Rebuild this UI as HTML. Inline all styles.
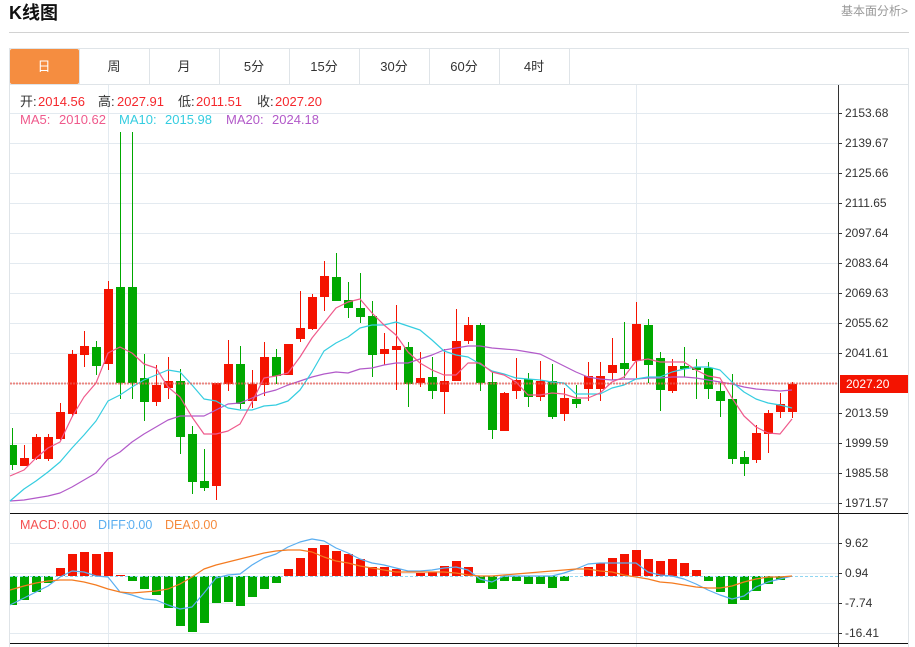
<!DOCTYPE html>
<html lang="zh">
<head>
<meta charset="utf-8">
<title>K线图</title>
<style>
html,body{margin:0;padding:0;background:#fff;width:915px;height:647px;overflow:hidden}
svg{display:block;position:absolute;left:0;top:0}
text{font-family:"Liberation Sans","Noto Sans CJK SC",sans-serif}
</style>
</head>
<body>
<svg width="915" height="647" viewBox="0 0 915 647" xmlns="http://www.w3.org/2000/svg">
<rect width="915" height="647" fill="#fff"/>
<text x="9" y="19" font-size="18" font-weight="700" fill="#111">K线图</text>
<text x="841" y="15" font-size="12" fill="#999">基本面分析&gt;</text>
<g shape-rendering="crispEdges">
<rect x="9" y="32" width="900" height="1" fill="#d2d2d2"/>
<rect x="9" y="48" width="900" height="1" fill="#dfe4e8"/>
<rect x="9" y="84" width="900" height="1" fill="#dfe4e8"/>
<rect x="9" y="48" width="1" height="599" fill="#dfe4e8"/>
<rect x="908" y="48" width="1" height="599" fill="#dfe4e8"/>
<path d="M79.5 49V84M149.5 49V84M219.5 49V84M289.5 49V84M359.5 49V84M429.5 49V84M499.5 49V84M569.5 49V84" stroke="#dfe4e8" fill="none"/>
</g>
<rect x="10" y="49" width="69" height="35" rx="2" fill="#f58d40"/>
<g font-size="13" fill="#333" text-anchor="middle">
<text x="44" y="71" fill="#fff">日</text>
<text x="114" y="71">周</text>
<text x="184" y="71">月</text>
<text x="254" y="71">5分</text>
<text x="324" y="71">15分</text>
<text x="394" y="71">30分</text>
<text x="464" y="71">60分</text>
<text x="534" y="71">4时</text>
</g>
<g shape-rendering="crispEdges" stroke="#e3eaf0" fill="none">
<path d="M10 113.5H838M10 143.5H838M10 173.5H838M10 203.5H838M10 233.5H838M10 263.5H838M10 293.5H838M10 323.5H838M10 353.5H838M10 383.5H838M10 413.5H838M10 443.5H838M10 473.5H838M10 503.5H838"/>
<path d="M10 543.5H838M10 573.5H838M10 603.5H838M10 633.5H838"/>
<path d="M108.5 85V647M636.5 85V647"/>
</g>
<g shape-rendering="crispEdges">
<g stroke="#f41300" fill="none">
<path d="M24.5 445V466M36.5 434V460M48.5 434V461M60.5 403V440M72.5 350V417M84.5 331V367M108.5 281V370M156.5 365V406M168.5 357V399M216.5 383V500M228.5 340V391M252.5 370V408M264.5 342V396M288.5 344V375M300.5 291V342M312.5 294V330M324.5 261V311M384.5 333V365M396.5 305V390M420.5 352V387M444.5 349V414M456.5 309V381M468.5 317V344M504.5 392V431M516.5 358V399M540.5 361V401M564.5 388V421M588.5 362V401M600.5 362V401M612.5 338V380M636.5 302V378M672.5 359V393M756.5 425V463M768.5 410V453M780.5 393V418M792.5 382V418"/>
</g>
<path fill="#f41300" d="M20 458h9v8h-9zM32 437h9v22h-9zM44 437h9v22h-9zM56 412h9v27h-9zM68 354h9v60h-9zM80 346h9v9h-9zM104 289h9v75h-9zM152 385h9v17h-9zM164 381h9v7h-9zM212 383h9v103h-9zM224 364h9v20h-9zM248 384h9v17h-9zM260 357h9v28h-9zM284 344h9v31h-9zM296 328h9v11h-9zM308 297h9v32h-9zM320 276h9v21h-9zM380 349h9v5h-9zM392 346h9v4h-9zM416 378h9v5h-9zM440 381h9v11h-9zM452 341h9v40h-9zM464 325h9v16h-9zM500 393h9v38h-9zM512 380h9v11h-9zM536 381h9v16h-9zM560 398h9v16h-9zM584 376h9v13h-9zM596 376h9v13h-9zM608 365h9v8h-9zM632 324h9v37h-9zM668 366h9v25h-9zM752 433h9v27h-9zM764 413h9v21h-9zM776 404h9v8h-9zM788 384h9v28h-9z"/>
<g stroke="#00a800" fill="none">
<path d="M12.5 428V470M96.5 341V375M120.5 132V399M132.5 132V399M144.5 354V421M180.5 369V454M192.5 426V494M204.5 449V491M240.5 346V409M276.5 349V384M336.5 253V301M348.5 282V318M360.5 273V323M372.5 301V377M408.5 342V407M432.5 357V399M480.5 323V391M492.5 372V439M528.5 373V407M552.5 364V419M576.5 385V408M624.5 322V378M648.5 319V383M660.5 352V411M684.5 347V377M696.5 359V399M708.5 362V399M720.5 383V417M732.5 374V464M744.5 451V476"/>
</g>
<path fill="#00a800" d="M10 445h7v20h-7zM92 347h9v19h-9zM116 287h9v96h-9zM128 287h9v96h-9zM140 378h9v24h-9zM176 381h9v56h-9zM188 434h9v48h-9zM200 481h9v7h-9zM236 364h9v40h-9zM272 357h9v19h-9zM332 277h9v24h-9zM344 300h9v8h-9zM356 308h9v9h-9zM368 316h9v39h-9zM404 347h9v37h-9zM428 377h9v14h-9zM476 325h9v58h-9zM488 382h9v48h-9zM524 379h9v18h-9zM548 381h9v36h-9zM572 399h9v5h-9zM620 363h9v6h-9zM644 325h9v40h-9zM656 358h9v32h-9zM680 366h9v3h-9zM692 367h9v3h-9zM704 368h9v21h-9zM716 391h9v10h-9zM728 399h9v60h-9zM740 457h9v7h-9z"/>
</g>
<g fill="none" stroke-width="1.2" stroke-linejoin="round">
<polyline stroke="#b25ac9" points="10,501 24,500 36,498 48,496 60,493 72,487 84,480 96,473 108,459 120,452 132,442 144,434 156,427 168,420 180,416 192,416 204,416 216,410 228,404 240,403 252,398 264,393 276,390 288,385 300,381 312,377 324,374 336,372 348,373 360,369 372,368 384,365 396,363 408,363 420,359 432,355 444,350 456,348 468,346 480,346 492,348 504,349 516,350 528,352 540,354 552,360 564,366 576,372 588,377 600,379 612,380 624,379 636,379 648,378 660,378 672,377 684,377 696,378 708,380 720,382 732,384 744,387 756,389 768,390 780,391 792,390"/>
<polyline stroke="#35cde0" points="10,501 24,489 36,481 48,472 60,462 72,448 84,435 96,421 108,401 120,395 132,387 144,380 156,375 168,370 180,372 192,385 204,399 216,401 228,408 240,410 252,410 264,406 276,405 288,401 300,390 312,372 324,351 336,343 348,337 360,328 372,325 384,325 396,322 408,326 420,330 432,340 444,351 456,355 468,357 480,364 492,371 504,374 516,378 528,379 540,380 552,382 564,383 576,394 588,394 600,394 612,388 624,385 636,379 648,377 660,377 672,372 684,369 696,367 708,367 720,370 732,382 744,392 756,399 768,403 780,405 792,408"/>
<polyline stroke="#ef5a8c" points="10,476 24,470 36,458 48,448 60,442 72,417 84,397 96,383 108,353 120,347 132,353 144,364 156,368 168,387 180,397 192,417 204,434 216,434 228,431 240,424 252,402 264,378 276,376 288,373 300,357 312,338 324,323 336,308 348,302 360,299 372,313 384,325 396,335 408,352 420,363 432,370 444,375 456,375 468,363 480,363 492,372 504,375 516,382 528,395 540,395 552,393 564,394 576,398 588,398 600,393 612,382 624,377 636,361 648,359 660,362 672,362 684,362 696,370 708,376 720,378 732,398 744,416 756,427 768,433 780,434 792,419"/>
</g>
<path d="M10 383.5H838" stroke="#ea5a50" stroke-width="2" stroke-dasharray="2 1" fill="none" opacity=".7"/>
<path shape-rendering="crispEdges" fill="#f41300" d="M56 576V568h9v8zM68 576V554h9v22zM80 576V552h9v24zM92 576V554h9v22zM104 576V552h9v24zM116 576V575h9v1zM284 576V569h9v7zM296 576V558h9v18zM308 576V548h9v28zM320 576V545h9v31zM332 576V551h9v25zM344 576V554h9v22zM356 576V559h9v17zM368 576V567h9v9zM380 576V567h9v9zM392 576V569h9v7zM416 576V573h9v3zM428 576V572h9v4zM440 576V566h9v10zM452 576V561h9v15zM464 576V567h9v9zM584 576V567h9v9zM596 576V563h9v13zM608 576V558h9v18zM620 576V554h9v22zM632 576V550h9v26zM644 576V559h9v17zM656 576V561h9v15zM668 576V559h9v17zM680 576V563h9v13zM692 576V570h9v6z"/>
<path shape-rendering="crispEdges" fill="#00a800" d="M10 576h7v29h-7zM20 576h9v24h-9zM32 576h9v16h-9zM44 576h9v7h-9zM128 576h9v5h-9zM140 576h9v13h-9zM152 576h9v19h-9zM164 576h9v32h-9zM176 576h9v50h-9zM188 576h9v56h-9zM200 576h9v47h-9zM212 576h9v27h-9zM224 576h9v26h-9zM236 576h9v30h-9zM248 576h9v21h-9zM260 576h9v13h-9zM272 576h9v7h-9zM476 576h9v7h-9zM488 576h9v13h-9zM500 576h9v5h-9zM512 576h9v5h-9zM524 576h9v8h-9zM536 576h9v8h-9zM548 576h9v12h-9zM560 576h9v5h-9zM704 576h9v5h-9zM716 576h9v16h-9zM728 576h9v28h-9zM740 576h9v24h-9zM752 576h9v15h-9zM764 576h9v8h-9zM776 576h9v4h-9z"/>
<path d="M10 576.5H838" stroke="#8fd6f2" stroke-dasharray="3 2" fill="none" shape-rendering="crispEdges"/>
<g fill="none" stroke-width="1.2" stroke-linejoin="round">
<polyline stroke="#5aaef0" points="10,605 24,598 36,592 48,586 60,577 72,571 84,572 96,576 108,577 120,592 132,595 144,599 156,600 168,605 180,609 192,607 204,593 216,578 228,575 240,574 252,565 264,558 276,554 288,547 300,542 312,539 324,541 336,548 348,553 360,559 372,563 384,565 396,568 408,571 420,571 432,570 444,568 456,567 468,570 480,579 492,582 504,576 516,576 528,576 540,576 552,576 564,573 576,569 588,564 600,563 612,563 624,563 636,563 648,572 660,575 672,576 684,579 696,584 708,590 720,595 732,599 744,596 756,587 768,582 780,579 792,576"/>
<polyline stroke="#f47b20" points="10,590 24,586 36,583 48,581 60,580 72,580 84,582 96,585 108,589 120,592 132,593 144,592 156,591 168,589 180,584 192,577 204,569 216,565 228,562 240,559 252,556 264,553 276,551 288,550 300,550 312,552 324,557 336,561 348,563 360,566 372,568 384,570 396,572 408,572 420,572 432,572 444,572 456,573 468,575 480,576 492,576 504,575 516,574 528,573 540,572 552,571 564,570 576,569 588,569 600,571 612,572 624,575 636,577 648,579 660,582 672,583 684,585 696,587 708,588 720,588 732,586 744,582 756,579 768,577 780,577 792,576"/>
</g>
<g shape-rendering="crispEdges">
<rect x="10" y="513" width="898" height="1" fill="#111"/>
<rect x="10" y="643" width="898" height="1" fill="#111"/>
<rect x="838" y="85" width="1" height="562" fill="#333"/>
<path d="M838 113.5h4M838 143.5h4M838 173.5h4M838 203.5h4M838 233.5h4M838 263.5h4M838 293.5h4M838 323.5h4M838 353.5h4M838 413.5h4M838 443.5h4M838 473.5h4M838 503.5h4M838 543.5h4M838 573.5h4M838 603.5h4M838 633.5h4" stroke="#333" fill="none"/>
<rect x="840" y="375" width="68" height="18" fill="#f41300"/>
</g>
<g font-size="12" fill="#333">
<text x="845" y="117">2153.68</text>
<text x="845" y="147">2139.67</text>
<text x="845" y="177">2125.66</text>
<text x="845" y="207">2111.65</text>
<text x="845" y="237">2097.64</text>
<text x="845" y="267">2083.64</text>
<text x="845" y="297">2069.63</text>
<text x="845" y="327">2055.62</text>
<text x="845" y="357">2041.61</text>
<text x="845" y="417">2013.59</text>
<text x="845" y="447">1999.59</text>
<text x="845" y="477">1985.58</text>
<text x="845" y="507">1971.57</text>
<text x="845" y="547">9.62</text>
<text x="845" y="577">0.94</text>
<text x="845" y="607">-7.74</text>
<text x="845" y="637">-16.41</text>
<text x="846" y="388" fill="#fff">2027.20</text>
</g>
<g font-size="13">
<text x="20" y="106" fill="#333">开:</text><text x="38" y="106" fill="#f5282d">2014.56</text>
<text x="98" y="106" fill="#333">高:</text><text x="117" y="106" fill="#f5282d">2027.91</text>
<text x="178" y="106" fill="#333">低:</text><text x="196" y="106" fill="#f5282d">2011.51</text>
<text x="257" y="106" fill="#333">收:</text><text x="275" y="106" fill="#f5282d">2027.20</text>
<text x="20" y="124" fill="#ef5a8c">MA5:</text><text x="59" y="124" fill="#ef5a8c">2010.62</text>
<text x="119" y="124" fill="#35cde0">MA10:</text><text x="165" y="124" fill="#35cde0">2015.98</text>
<text x="226" y="124" fill="#b25ac9">MA20:</text><text x="272" y="124" fill="#b25ac9">2024.18</text>
<text x="20" y="529" font-size="12.5" fill="#f55050">MACD:</text><text x="62" y="529" font-size="12.5" fill="#f55050">0.00</text>
<text x="98" y="529" font-size="12.5" fill="#5aaef0">DIFF:</text><text x="128" y="529" font-size="12.5" fill="#5aaef0">0.00</text>
<text x="165" y="529" font-size="12.5" fill="#f58a3c">DEA:</text><text x="193" y="529" font-size="12.5" fill="#f58a3c">0.00</text>
</g>
</svg>
</body>
</html>
